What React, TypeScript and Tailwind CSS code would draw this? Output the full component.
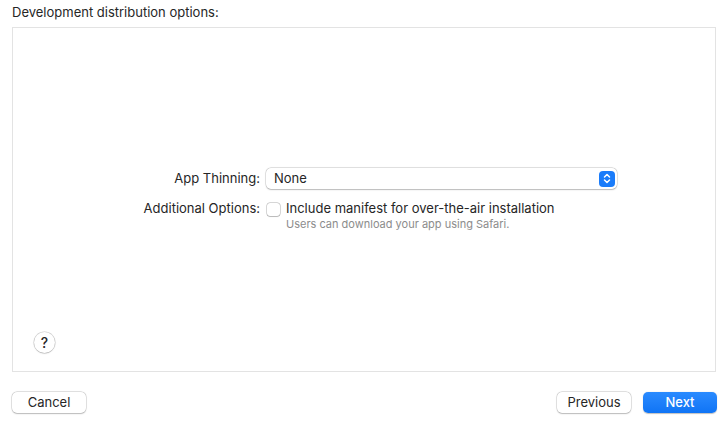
import React from "react";

// Export sheet: development distribution options (macOS style)
const font = { fontFamily: '"Inter", "Liberation Sans", "Noto Sans", sans-serif' };

function PushButton({ children, primary = false }: { children: React.ReactNode; primary?: boolean }) {
  if (primary) {
    return (
      <button className="flex h-[21px] w-[74px] items-center justify-center rounded-[5px] bg-gradient-to-b from-[#2a8bff] to-[#0f74f5] text-[13px] font-medium text-white shadow-[0_0.5px_1px_rgba(0,0,0,0.25)]">
        {children}
      </button>
    );
  }
  return (
    <button className="flex h-[21px] w-[74px] items-center justify-center rounded-[5px] bg-white text-[13px] text-[#262626] shadow-[0_0_0_0.5px_rgba(0,0,0,0.18),0_0.5px_1.5px_rgba(0,0,0,0.2)]">
      {children}
    </button>
  );
}

export default function App() {
  return (
    <div className="flex h-[426px] w-[727px] flex-col bg-white pl-3 pr-[10px]" style={font}>
      <div className="flex h-[27px] items-start pt-[4px] text-[13px] leading-4 text-[#262626]">
        Development distribution options:
      </div>

      <div className="mr-[1px] flex h-[345px] flex-col border border-[#e3e3e3] bg-white">
        <div className="ml-[117px] mt-[140px] grid grid-cols-[130px_351px] gap-x-[6px] text-[13px] text-[#262626]">
          <div className="flex h-[21px] items-center justify-end">App Thinning:</div>
          <div className="flex h-[21px] items-center justify-between rounded-[5px] bg-white pl-[8px] pr-[2px] shadow-[0_0_0_0.5px_rgba(0,0,0,0.18),0_0.5px_1.5px_rgba(0,0,0,0.2)]">
            <span>None</span>
            <span className="flex h-[16px] w-[16px] items-center justify-center rounded-[4px] bg-[#1a7cfa]">
              <svg width="8" height="11" viewBox="0 0 8 11" fill="none" stroke="white" strokeWidth="1.5" strokeLinecap="round" strokeLinejoin="round">
                <path d="M1.5 4 L4 1.5 L6.5 4" />
                <path d="M1.5 7 L4 9.5 L6.5 7" />
              </svg>
            </span>
          </div>

          <div className="mt-[12px] flex h-[16px] items-center justify-end">Additional Options:</div>
          <div className="mt-[12px] flex flex-col">
            <div className="flex h-[16px] items-center">
              <span className="ml-[1px] h-[13px] w-[13px] rounded-[3px] bg-white shadow-[0_0_0_0.5px_rgba(0,0,0,0.3),0_0.5px_1px_rgba(0,0,0,0.15)]" />
              <span className="ml-[6px]">Include manifest for over-the-air installation</span>
            </div>
            <div className="ml-[20px] h-[14px] text-[11px] leading-[14px] text-[#8c8c8c]">
              Users can download your app using Safari.
            </div>
          </div>
        </div>

        <div className="mb-[18px] ml-[21px] mt-auto flex h-[21px] w-[21px] items-center justify-center rounded-full bg-white text-[14px] font-medium text-[#262626] shadow-[0_0_0_0.5px_rgba(0,0,0,0.18),0_0.5px_1.5px_rgba(0,0,0,0.2)]">
          ?
        </div>
      </div>

      <div className="mt-[20px] flex items-center">
        <PushButton>Cancel</PushButton>
        <div className="ml-auto flex gap-3">
          <PushButton>Previous</PushButton>
          <PushButton primary>Next</PushButton>
        </div>
      </div>
    </div>
  );
}
